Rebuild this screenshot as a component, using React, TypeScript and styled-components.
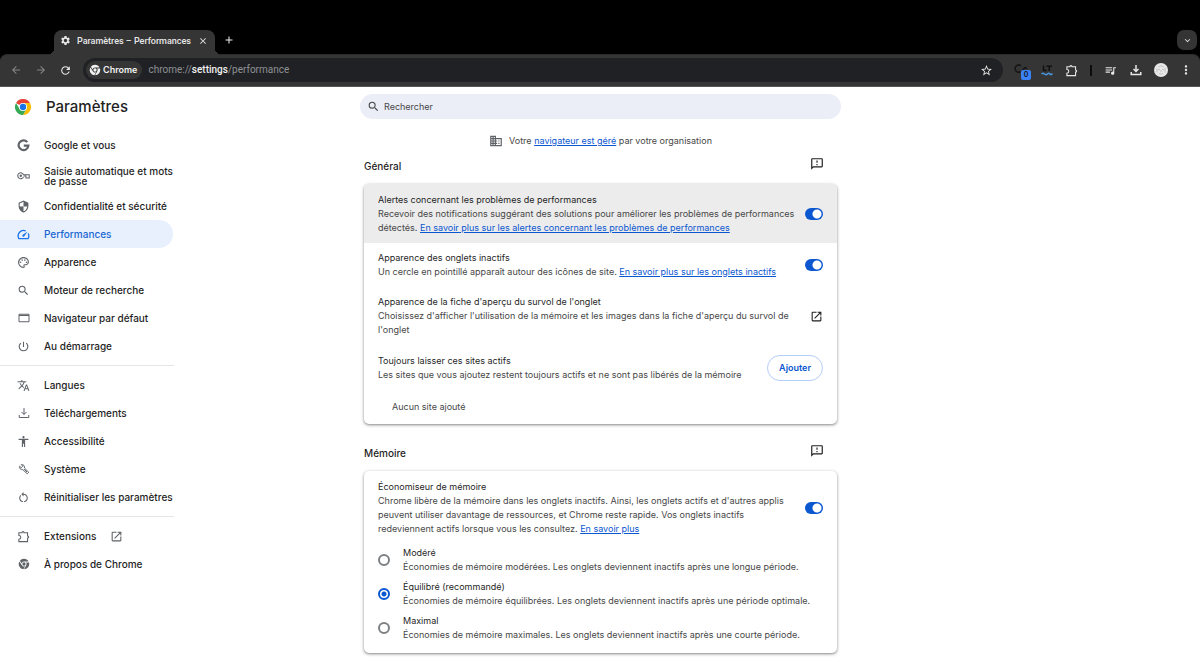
import React from "react";
import styled, { createGlobalStyle, css } from "styled-components";
import {
  MdArrowBack, MdArrowForward, MdRefresh, MdSettings, MdClose, MdAdd, MdExpandMore, MdStarBorder,
  MdQueueMusic, MdMoreVert, MdSearch, MdBusiness, MdRestartAlt,
  MdOpenInNew, MdSecurity, MdOutlinePalette, MdPowerSettingsNew,
  MdTranslate, MdAccessibility, MdOutlineSmsFailed,
} from "react-icons/md";

const Global = createGlobalStyle`
  * { box-sizing: border-box; }
  body { margin: 0; background: #fff; color: #1f1f1f; font-family: Inter, "Liberation Sans", sans-serif; font-size: 9px; line-height: 14px; }
  button, input { font: inherit; color: inherit; }
  button { padding: 0; border: 0; background: none; display: grid; place-items: center; }
  svg { display: block; flex: none; }
`;

const Browser = styled.div`background: #000;`;
const TabStrip = styled.div`
  height: 54px; padding: 0 3px 0 54px; display: flex; align-items: flex-end;
`;
const Tab = styled.div`
  position: relative; width: 161px; height: 25px; margin-bottom: -1px; padding: 0 6px 4px; display: flex; align-items: center; gap: 6px;
  background: #353535; color: #e8e8e8; border-radius: 8px 8px 0 0; font-family: Roboto, sans-serif; font-weight: 500;
  &::before, &::after { content: ""; position: absolute; bottom: 0; width: 7px; height: 7px; }
  &::before { left: -7px; background: radial-gradient(circle at 0 0, transparent 7px, #353535 7px); }
  &::after { right: -7px; background: radial-gradient(circle at 100% 0, transparent 7px, #353535 7px); }
`;
const TabTitle = styled.span`flex: 1; white-space: nowrap;`;
const TabClose = styled.button`width: 10px; height: 10px; margin-right: 1px;`;
const StripButton = styled.button`width: 28px; height: 28px; color: #f1f1f1;`;
const TabSearch = styled.button`
  width: 20px; height: 20px; margin: 0 0 4px auto; border-radius: 7px; background: #343434; color: #e3e3e3;
`;
const Toolbar = styled.div`
  height: 33px; padding: 0 2px 1px 7px; display: flex; align-items: center; background: #353535; color: #e8e8e8;
  border-radius: 7px 7px 0 0; border-top: 1px solid #2b2b2b; border-bottom: 1px solid #555;
`;
const ToolButton = styled.button<{ $dim?: boolean; $w?: number }>`
  position: relative; width: ${p => p.$w ?? 25}px; height: 24px; color: ${p => (p.$dim ? "#858585" : "#e8e8e8")};
`;
const Address = styled.div`
  flex: 1; height: 24px; margin: 0 6px 0 9px; padding: 0 10px 0 3px; display: flex; align-items: center; gap: 6px;
  border-radius: 12px; background: #202124;
`;
const Chip = styled.span`
  height: 18px; padding: 0 5px 0 3px; display: flex; align-items: center; gap: 2px; border-radius: 9px;
  background: #353535; color: #f1f1f1; font-weight: 600;
`;
const Url = styled.span`
  flex: 1; font-family: Roboto, sans-serif; font-size: 10px; color: #8f9195;
  b { color: #f1f1f1; font-weight: 500; }
`;
const Badge = styled.span`
  position: absolute; right: 3px; bottom: 2px; width: 10px; height: 10px; border-radius: 2px; background: #3b82f6;
  color: #111; font-size: 7px; line-height: 10px; font-weight: 600; text-align: center;
`;
const Divider = styled.span`width: 2px; height: 11px; margin: 0 6px; background: #0c0c0c;`;

const Page = styled.div`display: grid; grid-template-columns: 174px minmax(0, 1fr); min-height: calc(100vh - 87px);`;
const Sidebar = styled.aside``;
const Brand = styled.h1`
  height: 39px; margin: 0 0 5px; padding-left: 15px; display: flex; align-items: center; gap: 15px;
  font-size: 15px; line-height: 20px; font-weight: 500;
`;
const NavGroup = styled.nav`
  padding-right: 1px;
  & + & { margin-top: 5px; padding-top: 5px; border-top: 1px solid #e6e6e6; }
`;
const NavItem = styled.a<{ $active?: boolean; $tall?: boolean }>`
  height: ${p => (p.$tall ? 33 : 28)}px; padding: 0 0 0 17px; display: flex; align-items: center; gap: 14px;
  border-radius: 0 14px 14px 0; color: #1f1f1f; font-size: 10px; line-height: 10px; font-weight: 500; text-decoration: none;
  svg { color: #5f6368; }
  ${p => p.$active && css`background: #e8f0fe; color: #1967d2; svg { color: #1a73e8; }`}
`;
const Main = styled.main`
  width: 100%; max-width: 481px; padding: 7px 0 16px; margin-left: 186px;
`;
const Search = styled.label`
  height: 25px; padding: 0 7px; display: flex; align-items: center; gap: 4px; border-radius: 13px; background: #ebeef7; color: #474747;
  input { flex: 1; border: 0; outline: 0; padding: 0; background: none; }
  input::placeholder { color: #474747; opacity: 1; }
`;
const Link = styled.a`color: #0b57d0; text-decoration: underline;`;
const Managed = styled.p`
  margin: 15px 0 0; display: flex; justify-content: center; align-items: center; gap: 6px; color: #474747;
  svg { color: #5f6368; }
`;
const Section = styled.section`padding: 0 4px; & + & { margin-top: 11px; }`;
const SectionHead = styled.header`
  height: 36px; padding-right: 13px; display: flex; align-items: center; justify-content: space-between;
  h2 { margin: 0; font-size: 10px; line-height: 14px; font-weight: 500; }
  button { padding-bottom: 4px; }
`;
const Card = styled.div<{ $pad?: boolean }>`
  border-radius: 5px; background: #fff; overflow: hidden; padding-bottom: ${p => (p.$pad ? 8 : 0)}px;
  box-shadow: 0 1px 2px rgba(60, 64, 67, 0.4), 0 1px 3px 1px rgba(60, 64, 67, 0.2);
`;
const Row = styled.div<{ $shade?: boolean; $top?: number; $bottom?: number }>`
  padding: ${p => p.$top ?? 8}px 14px ${p => p.$bottom ?? 8}px; display: flex; align-items: center; justify-content: space-between; gap: 8px;
  background: ${p => (p.$shade ? "#ececec" : "transparent")};
`;
const Copy = styled.div`flex: 1; min-width: 0; color: #474747;`;
const Title = styled.div`color: #1f1f1f;`;
const Toggle = styled.input`
  appearance: none; flex: none; width: 18px; height: 12px; margin: 0; border-radius: 6px;
  background: radial-gradient(circle at 12px 50%, #fff 4px, #0b57d0 5px);
`;
const Outlined = styled.button`
  height: 26px; padding: 0 11px; border: 1px solid #b3cdf9; border-radius: 13px; color: #0b57d0; font-weight: 600;
`;
const Empty = styled.div`padding: 10px 28px; color: #474747;`;
const Option = styled.label`
  padding: 3px 14px; display: flex; align-items: center; gap: 13px;
`;
const Radio = styled.input`
  appearance: none; flex: none; width: 12px; height: 12px; margin: 0; border: 2px solid #7d8084; border-radius: 50%;
  &:checked { border-color: #0b57d0; background: radial-gradient(circle, #0b57d0 2px, transparent 3px); }
`;

const ChromeMono = ({ size = 12 }: { size?: number }) => (
  <svg width={size} height={size} viewBox="0 0 24 24" fill="currentColor" aria-hidden="true">
    <path d="M12 1.500c4 0 7.300 2.100 9.100 5.500H12c-2.400 0-4.300 1.600-4.800 3.800L3.700 5.400A10.400 10.400 0 0 1 12 1.500Z" />
    <path d="M2.800 7A10.400 10.400 0 0 0 10.700 22.400l3.500-5.900c-2.600.9-5.200-.1-6.500-2.200Z" />
    <path d="M22 9h-6c1.500 1.800 1.500 4.300.3 6.200l-4.300 7.300A10.500 10.500 0 0 0 22 9Z" />
    <circle cx="12" cy="12" r="3.300" />
  </svg>
);
const ChromeLogo = () => (
  <svg width="16" height="16" viewBox="0 0 48 48" aria-hidden="true">
    <path fill="#ea4335" d="M24 24 3.200 12A24 24 0 0 1 44.800 12H24Z" />
    <path fill="#fbbc04" d="M44.800 12A24 24 0 0 1 24 48L34.400 30 24 12Z" />
    <path fill="#34a853" d="M24 48A24 24 0 0 1 3.200 12L13.600 30 24 36l10.400-6Z" />
    <circle cx="24" cy="24" r="12" fill="#fff" />
    <circle cx="24" cy="24" r="9.500" fill="#1a73e8" />
  </svg>
);
const Glyph = ({ d, size = 12, weight = 2 }: { d: string; size?: number; weight?: number }) => (
  <svg width={size} height={size} viewBox="0 0 24 24" fill="none" stroke="currentColor" strokeWidth={weight} aria-hidden="true"><path d={d} /></svg>
);
const GoogleG = () => (
  <svg width="13" height="13" viewBox="0 0 24 24" fill="none" stroke="currentColor" strokeWidth="4" aria-hidden="true">
    <path d="M19 5.800A9 9 0 1 0 21 12.200H12.500" />
  </svg>
);
const KeyIcon = () => (
  <svg width="13" height="13" viewBox="0 0 24 24" fill="none" stroke="currentColor" strokeWidth="2" aria-hidden="true">
    <path d="M12 10.500A5.500 5.500 0 1 0 12 14.500M12 10.500h10.500v6h-6v-3.500H12" /><circle cx="7" cy="12.500" r="2.200" fill="currentColor" stroke="none" />
  </svg>
);
const Gauge = () => (
  <svg width="13" height="13" viewBox="0 0 24 24" fill="none" stroke="currentColor" strokeWidth="2.400" aria-hidden="true">
    <path d="M16 5.300A10 10 0 0 0 3.500 19.500h17A10 10 0 0 0 20.700 10" />
    <path d="M19.500 6.500 10.700 12.500a2 2 0 1 0 2.800 2.800Z" fill="currentColor" stroke="none" />
  </svg>
);
const WindowIcon = () => <Glyph d="M2 4.500h20v15H2ZM2 7h20" />;
const DownloadIcon = ({ weight = 2 }: { weight?: number }) => <Glyph weight={weight} d="M12 2v13M7 10l5 5 5-5M2.500 16v5h19v-5" />;
const Wrench = () => (
  <Glyph d="M9.500 13.200 18.500 21.500l3-3-8.700-8.500A5.200 5.200 0 0 0 6.500 3.300L9.700 6.500 6.500 9.700 3.300 6.500A5.200 5.200 0 0 0 9.500 13.200ZM12.500 12.500l5.500 5.500" />
);
const Puzzle = ({ size = 13 }: { size?: number }) => (
  <Glyph size={size} d="M3.500 5H9a2 2 0 0 1 4 0h6.500v6a2 2 0 0 1 0 4v6.500h-16V17a3.500 3.500 0 0 0 0-7Z" />
);
const LanguageTool = () => (
  <svg width="12" height="12" viewBox="0 0 24 24" fill="none" strokeWidth="3" aria-hidden="true">
    <path stroke="#111" d="M5 3v10h6M11 4.500h11M16.500 4v10" />
    <path stroke="#4794db" d="M1 20q3-3 6 0t6 0 5 0 5-1" />
  </svg>
);
const Copyleft = () => (
  <svg width="15" height="12" viewBox="0 0 30 24" fill="none" stroke="#151515" strokeWidth="3" aria-hidden="true">
    <path d="M14 4A7 7 0 1 0 13 15M26 9a5 5 0 1 0 0 8" />
  </svg>
);
const Avatar = () => (
  <svg width="14" height="14" viewBox="0 0 28 28" aria-hidden="true">
    <circle cx="14" cy="14" r="14" fill="#e8e8e8" />
    <path d="M8 8q6-5 12 0M8 13h4M16 13h4M14 14v4M10 21q4 2 8 0M6 11v8M22 10v9" fill="none" stroke="#b5b5b5" strokeWidth="1.500" />
  </svg>
);

type Item = { label: string; icon: React.ReactNode; active?: boolean; tall?: boolean; external?: boolean };
const groups: Item[][] = [
  [
    { label: "Google et vous", icon: <GoogleG /> },
    { label: "Saisie automatique et mots de passe", icon: <KeyIcon />, tall: true },
    { label: "Confidentialité et sécurité", icon: <MdSecurity size={13} /> },
    { label: "Performances", icon: <Gauge />, active: true },
    { label: "Apparence", icon: <MdOutlinePalette size={13} /> },
    { label: "Moteur de recherche", icon: <MdSearch size={13} /> },
    { label: "Navigateur par défaut", icon: <WindowIcon /> },
    { label: "Au démarrage", icon: <MdPowerSettingsNew size={13} /> },
  ],
  [
    { label: "Langues", icon: <MdTranslate size={13} /> },
    { label: "Téléchargements", icon: <DownloadIcon /> },
    { label: "Accessibilité", icon: <MdAccessibility size={13} /> },
    { label: "Système", icon: <Wrench /> },
    { label: "Réinitialiser les paramètres", icon: <MdRestartAlt size={13} /> },
  ],
  [
    { label: "Extensions", icon: <Puzzle />, external: true },
    { label: "À propos de Chrome", icon: <ChromeMono /> },
  ],
];
const options = [
  ["Modéré", "Économies de mémoire modérées. Les onglets deviennent inactifs après une longue période."],
  ["Équilibré (recommandé)", "Économies de mémoire équilibrées. Les onglets deviennent inactifs après une période optimale."],
  ["Maximal", "Économies de mémoire maximales. Les onglets deviennent inactifs après une courte période."],
];
const IconSlot = styled.span`flex: none; width: 13px; display: grid; place-items: center;`;

export default function App() {
  return (
    <>
      <Global />
      <Browser>
        <TabStrip>
          <Tab>
            <MdSettings size={11} />
            <TabTitle>Paramètres – Performances</TabTitle>
            <TabClose aria-label="Fermer l'onglet"><MdClose size={10} /></TabClose>
          </Tab>
          <StripButton aria-label="Nouvel onglet"><MdAdd size={12} /></StripButton>
          <TabSearch aria-label="Rechercher dans les onglets"><MdExpandMore size={11} /></TabSearch>
        </TabStrip>
        <Toolbar>
          <ToolButton $dim $w={17} aria-label="Retour"><MdArrowBack size={12} /></ToolButton>
          <ToolButton $dim $w={33} aria-label="Avancer"><MdArrowForward size={12} /></ToolButton>
          <ToolButton $w={17} aria-label="Actualiser"><MdRefresh size={13} /></ToolButton>
          <Address>
            <Chip><ChromeMono />Chrome</Chip>
            <Url>chrome://<b>settings</b>/performance</Url>
            <button aria-label="Ajouter aux favoris"><MdStarBorder size={13} /></button>
          </Address>
          <ToolButton aria-label="Extension, 0 notification"><Copyleft /><Badge>0</Badge></ToolButton>
          <ToolButton aria-label="LanguageTool"><LanguageTool /></ToolButton>
          <ToolButton aria-label="Extensions"><Puzzle /></ToolButton>
          <Divider />
          <ToolButton aria-label="Commandes multimédias"><MdQueueMusic size={13} /></ToolButton>
          <ToolButton aria-label="Téléchargements"><DownloadIcon weight={3} /></ToolButton>
          <ToolButton aria-label="Profil"><Avatar /></ToolButton>
          <ToolButton aria-label="Menu"><MdMoreVert size={14} /></ToolButton>
        </Toolbar>
      </Browser>
      <Page>
        <Sidebar>
          <Brand><ChromeLogo />Paramètres</Brand>
          {groups.map((items, i) => (
            <NavGroup key={i}>
              {items.map(it => (
                <NavItem href="#" key={it.label} $active={it.active} $tall={it.tall}>
                  <IconSlot>{it.icon}</IconSlot>
                  {it.label}
                  {it.external && <MdOpenInNew size={13} />}
                </NavItem>
              ))}
            </NavGroup>
          ))}
        </Sidebar>
        <Main>
          <Search><MdSearch size={13} /><input type="search" aria-label="Rechercher" placeholder="Rechercher" /></Search>
          <Managed><MdBusiness size={14} /><span>Votre <Link href="#">navigateur est géré</Link> par votre organisation</span></Managed>
          <Section>
            <SectionHead><h2>Général</h2><button aria-label="Commentaires"><MdOutlineSmsFailed size={14} /></button></SectionHead>
            <Card>
              <Row $shade $top={9}>
                <Copy>
                  <Title>Alertes concernant les problèmes de performances</Title>
                  Recevoir des notifications suggérant des solutions pour améliorer les problèmes de performances détectés. <Link href="#">En savoir plus sur les alertes concernant les problèmes de performances</Link>
                </Copy>
                <Toggle type="checkbox" role="switch" defaultChecked aria-label="Alertes concernant les problèmes de performances" />
              </Row>
              <Row>
                <Copy>
                  <Title>Apparence des onglets inactifs</Title>
                  Un cercle en pointillé apparaît autour des icônes de site. <Link href="#">En savoir plus sur les onglets inactifs</Link>
                </Copy>
                <Toggle type="checkbox" role="switch" defaultChecked aria-label="Apparence des onglets inactifs" />
              </Row>
              <Row $bottom={9}>
                <Copy>
                  <Title>Apparence de la fiche d'aperçu du survol de l'onglet</Title>
                  Choisissez d'afficher l'utilisation de la mémoire et les images dans la fiche d'aperçu du survol de l'onglet
                </Copy>
                <button aria-label="Ouvrir"><MdOpenInNew size={13} /></button>
              </Row>
              <Row>
                <Copy>
                  <Title>Toujours laisser ces sites actifs</Title>
                  Les sites que vous ajoutez restent toujours actifs et ne sont pas libérés de la mémoire
                </Copy>
                <Outlined>Ajouter</Outlined>
              </Row>
              <Empty>Aucun site ajouté</Empty>
            </Card>
          </Section>
          <Section>
            <SectionHead><h2>Mémoire</h2><button aria-label="Commentaires"><MdOutlineSmsFailed size={14} /></button></SectionHead>
            <Card $pad>
              <Row $top={9} $bottom={7}>
                <Copy>
                  <Title>Économiseur de mémoire</Title>
                  Chrome libère de la mémoire dans les onglets inactifs. Ainsi, les onglets actifs et d'autres applis peuvent utiliser davantage de ressources, et Chrome reste rapide. Vos onglets inactifs redeviennent actifs lorsque vous les consultez. <Link href="#">En savoir plus</Link>
                </Copy>
                <Toggle type="checkbox" role="switch" defaultChecked aria-label="Économiseur de mémoire" />
              </Row>
              {options.map(([name, text], i) => (
                <Option key={name}>
                  <Radio type="radio" name="memory" defaultChecked={i === 1} />
                  <Copy as="span"><Title as="span">{name}</Title><br />{text}</Copy>
                </Option>
              ))}
            </Card>
          </Section>
        </Main>
      </Page>
    </>
  );
}
